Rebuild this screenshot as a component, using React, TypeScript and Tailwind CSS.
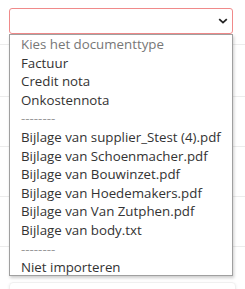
const options = [
  { label: 'Kies het documenttype', tone: 'placeholder' },
  { label: 'Factuur' },
  { label: 'Credit nota' },
  { label: 'Onkostennota' },
  { label: '--------', tone: 'divider' },
  { label: 'Bijlage van supplier_Stest (4).pdf' },
  { label: 'Bijlage van Schoenmacher.pdf' },
  { label: 'Bijlage van Bouwinzet.pdf' },
  { label: 'Bijlage van Hoedemakers.pdf' },
  { label: 'Bijlage van Van Zutphen.pdf' },
  { label: 'Bijlage van body.txt' },
  { label: '--------', tone: 'divider' },
  { label: 'Niet importeren' },
];

export default function App() {
  return (
    <div className="relative w-[245px] h-[289px] overflow-hidden bg-white font-['Open_Sans',sans-serif]">
      {/* Select row */}
      <div className="h-[45px] border-b border-[#ececec] px-[9px] pt-2">
        <div className="flex h-[26px] w-[224px] items-center justify-end rounded-[3px] border border-[#f08a8a] bg-white pr-[4px]">
          <svg width="10" height="6" viewBox="0 0 10 6" fill="none">
            <path d="M1.2 1.2L5 4.6l3.8-3.4" stroke="#222" strokeWidth="1.8" />
          </svg>
        </div>
      </div>

      {/* Table rows behind */}
      <div className="h-[52px] border-b border-[#ececec]" />
      <div className="h-[50px] border-b border-[#ececec]" />
      <div className="h-[50px] border-b border-[#ececec]" />
      <div className="h-[50px] border-b border-[#ececec]" />
      <div className="mx-[9px] mt-[35px] h-[20px] rounded-[4px] border border-[#f0f0f0] shadow-[0_1px_3px_rgba(0,0,0,0.08)]" />

      {/* Open dropdown */}
      <div className="absolute left-[9px] top-[34px] h-[242px] w-[224px] overflow-hidden border border-[#a0a0a0] bg-white shadow-[1px_2px_3px_rgba(0,0,0,0.2)]">
        {options.map((o, i) => (
          <div
            key={i}
            className={
              'h-[18.6px] pl-[11px] text-[13.3px] leading-[18.6px] whitespace-nowrap ' +
              (o.tone === 'placeholder'
                ? 'text-[#777]'
                : o.tone === 'divider'
                ? 'text-[#999]'
                : 'text-[#333]')
            }
          >
            {o.label}
          </div>
        ))}
      </div>
    </div>
  );
}
